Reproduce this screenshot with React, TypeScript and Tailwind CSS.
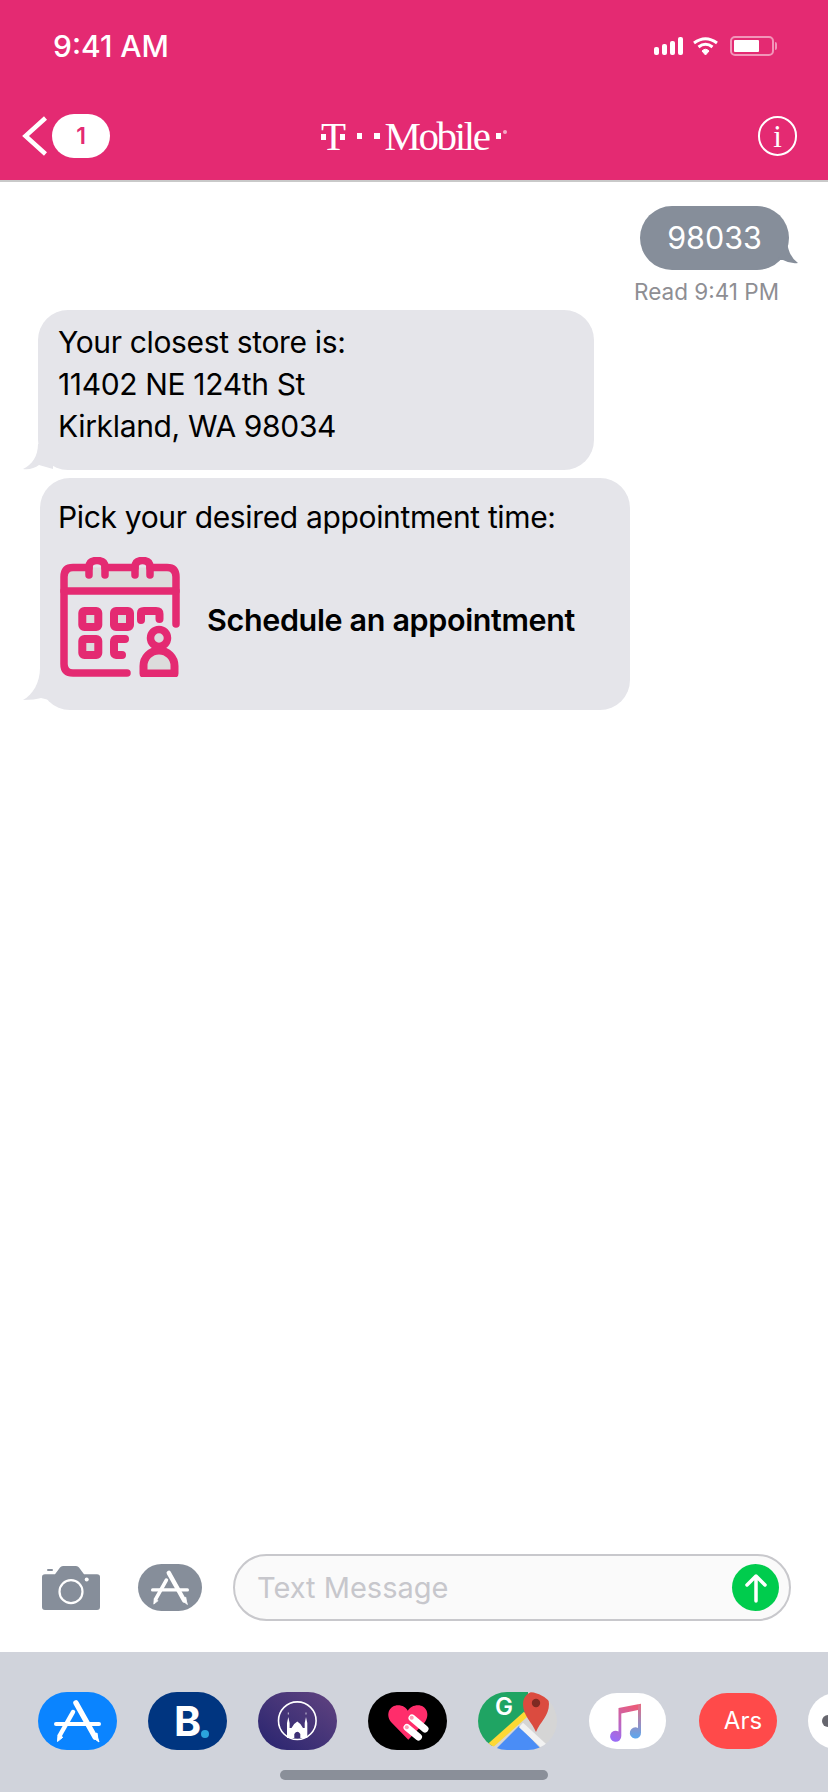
import React from 'react';

const AppStoreGlyph = () => (
  <svg viewBox="0 0 79 58" className="w-full h-full" fill="none" stroke="#fff" strokeLinecap="round">
    <path d="M38 11 L57 45" strokeWidth="5.5" />
    <path d="M35 20 L22 43" strokeWidth="4.5" />
    <path d="M18 32 H61" strokeWidth="4" />
    <path d="M20 43 L19.5 49.5 L24.5 45.5 Z" fill="#fff" strokeWidth="1" />
    <path d="M55 43 L59 41 Q59.5 46 61 50 Q56.5 48 55 43 Z" fill="#fff" strokeWidth="1" />
  </svg>
);

const Tail = ({ className, d, w, h, fill }: { className: string; d: string; w: number; h: number; fill: string }) => (
  <svg className={`absolute ${className}`} width={w} height={h} viewBox={`0 0 ${w} ${h}`}>
    <path d={d} fill={fill} />
  </svg>
);

const CalendarIcon = () => (
  <svg viewBox="0 0 120 120" className="w-[120px] h-[120px] shrink-0" fill="none" stroke="#e42a72" strokeWidth="7.5" strokeLinecap="round" strokeLinejoin="round">
    <path d="M4 34 V20 Q4 10.5 13 10.5 H107 Q116 10.5 116 20 V34 Z" fill="#dcdcdc" stroke="none" />
    <path d="M29 10.5 H13 Q4 10.5 4 20 V107 Q4 116 13 116 H67" />
    <path d="M45 10.5 H75 M90 10.5 H107 Q116 10.5 116 20 V67" />
    <path d="M4 34 H116" />
    <path d="M29 18 V10 Q29 3.5 37 3.5 Q45 3.5 45 10 V18" />
    <path d="M75 18 V10 Q75 3.5 82.5 3.5 Q90 3.5 90 10 V18" />
    <rect x="22.3" y="54" width="16" height="16" rx="2" fill="#dcdcdc" strokeWidth="8" />
    <rect x="54" y="54" width="16" height="16" rx="2" fill="#dcdcdc" strokeWidth="8" />
    <path d="M81 63 V56 Q81 54 84 54 H96 Q99.5 54 99.5 57 V62" strokeWidth="8" />
    <rect x="22.3" y="82" width="16" height="16" rx="2" fill="#dcdcdc" strokeWidth="8" />
    <path d="M65 82 H56 Q54 82 54 84.5 V95.5 Q54 98 56 98 H62" strokeWidth="8" />
    <circle cx="99" cy="81" r="8.5" fill="#dcdcdc" />
    <path d="M83.5 116.5 V109 A15.5 15.5 0 0 1 114.5 109 V116.5 Z" fill="#dcdcdc" strokeWidth="8" />
  </svg>
);

const AppIcon = ({ className, children }: { className: string; children?: React.ReactNode }) => (
  <div className="w-[79px] h-[58px] shrink-0 flex items-center justify-center">
    <div className={`overflow-hidden relative flex items-center justify-center ${className}`}>{children}</div>
  </div>
);

export default function App() {
  return (
    <div className="w-[828px] h-[1792px] overflow-hidden bg-white flex flex-col font-['Inter',sans-serif]">
      {/* header */}
      <header className="h-[182px] shrink-0 bg-[#e42a72] border-b-2 border-[#c9c9c9] text-white">
        <div className="h-[92px] flex items-center justify-between pl-[53px] pr-[51px]">
          <span className="text-[30px] font-medium">9:41 AM</span>
          <div className="flex items-center gap-[10px]">
            <div className="flex items-end gap-[3px] h-[18px]">
              <div className="w-[5px] h-[8px] bg-white rounded-[2px]" />
              <div className="w-[5px] h-[11px] bg-white rounded-[2px]" />
              <div className="w-[5px] h-[14px] bg-white rounded-[2px]" />
              <div className="w-[5px] h-[18px] bg-white rounded-[2px]" />
            </div>
            <svg width="25" height="18" viewBox="0 0 25 18" fill="none" stroke="#fff" strokeWidth="3">
              <path d="M1 6 Q12.5 -2.5 24 6" />
              <path d="M5.5 10 Q12.5 4.5 19.5 10" />
              <path d="M9 14 L12.5 18 L16 14 Q12.5 10.5 9 14 Z" fill="#fff" strokeWidth="1" />
            </svg>
            <div className="flex items-center gap-[1px] ml-[2px]">
              <div className="w-[44px] h-[20px] rounded-[5px] border-2 border-white/50 p-[2px]">
                <div className="w-[25px] h-full bg-white rounded-[1px]" />
              </div>
              <div className="w-[2px] h-[8px] bg-white/50 rounded-r-[2px]" />
            </div>
          </div>
        </div>
        <div className="mt-[22px] h-[44px] grid grid-cols-[1fr_auto_1fr] items-center">
          <div className="flex items-center pl-[22px] gap-[5px]">
            <svg width="25" height="40" viewBox="0 0 25 40" fill="none" stroke="#fff" strokeWidth="4.5">
              <path d="M23.5 2 L3.5 20 L23.5 38" />
            </svg>
            <div className="w-[58px] h-[44px] rounded-full bg-white flex items-center justify-center text-[#e42a72] text-[23px] font-semibold">1</div>
          </div>
          <div className="flex items-center font-['Liberation_Serif',serif] h-[44px]">
            <div className="relative w-[24px] flex justify-center text-[41px] leading-none">
              T
              <div className="absolute left-0 top-[18px] w-[5px] h-[6px] bg-white" />
              <div className="absolute right-0 top-[18px] w-[5px] h-[6px] bg-white" />
            </div>
            <div className="w-[5px] h-[6px] bg-white ml-[12px]" />
            <div className="w-[6px] h-[6px] bg-white ml-[12px]" />
            <span className="text-[41px] leading-none tracking-[-2.4px] ml-[4px]">Mobile</span>
            <div className="w-[5px] h-[6px] bg-white ml-[7px]" />
            <div className="w-[4px] h-[4px] rounded-full bg-white/60 ml-[2px] mb-[8px]" />
          </div>
          <div className="flex justify-end pr-[31px]">
            <div className="w-[39px] h-[40px] rounded-full border-2 border-white flex items-center justify-center font-['Liberation_Serif',serif] text-[31px] leading-none">i</div>
          </div>
        </div>
      </header>

      {/* messages */}
      <main className="flex-1 flex flex-col items-start pt-[24px] text-[30px] tracking-[-0.35px] text-black">
        <div className="relative self-end mr-[39px] w-[149px] h-[64px] rounded-[32px] bg-[#868e9a] text-white text-[30.5px] tracking-normal flex items-center justify-center">
          98033
          <Tail className="right-[-9px] top-[34px]" w={20} h={24} fill="#868e9a" d="M9 0 Q10 16 20 23 Q12 24 5 20 L0 20 Z" />
        </div>
        <div className="self-end mr-[49px] mt-[9px] text-[22.5px] tracking-normal leading-[26px] text-[#8e8e93]">Read 9:41 PM</div>
        <div className="relative ml-[38px] mt-[5px] w-[556px] h-[160px] rounded-[30px] bg-[#e5e5ea] pl-[20px] pt-[11px] leading-[42px]">
          <Tail className="left-[-15px] bottom-0" w={30} h={26} fill="#e5e5ea" d="M15 0 C15 12 9 21 0 25 C6 26 12 24 16 21 L30 25 V0 Z" />
          <div>Your closest store is:</div>
          <div>11402 NE 124th St</div>
          <div>Kirkland, WA 98034</div>
        </div>
        <div className="relative ml-[40px] mt-[8px] w-[590px] h-[232px] rounded-[30px] bg-[#e5e5ea] pl-[19px] pt-[18px]">
          <Tail className="left-[-17px] bottom-[8px]" w={34} h={34} fill="#e5e5ea" d="M17 0 C17 14 10 27 0 32 C8 32 14 31 18 30 L34 34 V0 Z" />
          <div className="leading-[42px] -ml-[1px]">Pick your desired appointment time:</div>
          <div className="flex items-center gap-[27px] mt-[19px] pl-[1px]">
            <CalendarIcon />
            <span className="font-semibold text-[30.5px] mt-[6px]">Schedule an appointment</span>
          </div>
        </div>
      </main>

      {/* input row */}
      <div className="h-[98px] shrink-0">
        <div className="flex items-center w-full pl-[42px] pr-[37px] h-[67px]">
          <svg width="58" height="44" viewBox="0 0 58 44" className="shrink-0">
            <path d="M3 8.3 H13 L18 1.5 Q19 0 21 0 H34 Q36 0 37 1.5 L42 8.3 H55 Q58 8.3 58 11 V41 Q58 44 55 44 H3 Q0 44 0 41 V11 Q0 8.3 3 8.3 Z" fill="#868e9a" />
            <rect x="5" y="3" width="6" height="2" rx="1" fill="#868e9a" />
            <circle cx="29" cy="25.7" r="11.5" fill="none" stroke="#fff" strokeWidth="2.2" />
            <circle cx="44.7" cy="13.5" r="2" fill="#fff" />
          </svg>
          <div className="w-[64px] h-[47px] rounded-full bg-[#868e9a] ml-[38px] shrink-0">
            <AppStoreGlyph />
          </div>
          <div className="ml-[31px] flex-1 h-[67px] rounded-full border-2 border-[#c8c8cc] bg-[#fafafa] flex items-center justify-between pl-[22px] pr-[10px]">
            <span className="text-[29px] text-[#c7c7cc]">Text Message</span>
            <div className="w-[47px] h-[47px] rounded-full bg-[#00cc4d] flex items-center justify-center">
              <svg width="24" height="30" viewBox="0 0 24 30" fill="none" stroke="#fff" strokeWidth="3.5" strokeLinecap="round" strokeLinejoin="round">
                <path d="M12 28 V3 M3 12 L12 3 L21 12" />
              </svg>
            </div>
          </div>
        </div>
      </div>

      {/* app tray */}
      <div className="h-[140px] shrink-0 bg-[#d0d3db] flex flex-col pt-[40px] overflow-hidden">
        <div className="flex gap-[31px] pl-[38px]">
          <AppIcon className="w-[79px] h-[58px] rounded-full bg-[#0a84ff]">
            <AppStoreGlyph />
          </AppIcon>
          <AppIcon className="w-[79px] h-[58px] rounded-full bg-[#003580]">
            <span className="text-white font-bold text-[41px] leading-none">B</span>
            <div className="absolute left-[53px] top-[38px] w-[8px] h-[8px] rounded-full bg-[#2ba4dc]" />
          </AppIcon>
          <AppIcon className="w-[79px] h-[58px] rounded-full bg-linear-to-tr from-[#28236f] to-[#624380]">
            <svg viewBox="0 0 79 58" className="w-full h-full">
              <circle cx="39.3" cy="28.7" r="18.8" fill="none" stroke="#fff" strokeWidth="1.6" />
              <path d="M29 46 V31 L30.3 25 L31.6 31 V36 L33.5 36 Q35 32 39.3 29.5 Q43.5 32 45 36 L46.7 36 V31 L48 25 L49.3 31 V46 H42.3 V42 Q39.3 37.5 36.3 42 V46 Z" fill="#fff" />
              <rect x="29.8" y="20.5" width="1" height="2" fill="#fff" opacity="0.7" />
              <rect x="47.5" y="20.5" width="1" height="2" fill="#fff" opacity="0.7" />
            </svg>
          </AppIcon>
          <AppIcon className="w-[79px] h-[58px] rounded-full bg-black">
            <svg viewBox="0 0 79 58" className="w-full h-full">
              <path d="M40.3 47.7 L23 30 C17 22 22 13.3 30 13.3 C34.5 13.3 38 15.5 39.8 18.7 C41.8 15.5 45.5 13.3 50 13.3 C58 13.3 62.5 22 57 30 Z" fill="#ff2d6b" />
              <path d="M44 26 L57 37" stroke="#fff" strokeWidth="7" strokeLinecap="round" />
              <path d="M39 35.5 L50.5 45" stroke="#fff" strokeWidth="7" strokeLinecap="round" />
              <circle cx="43.7" cy="25.8" r="2" fill="#ff9ab5" />
              <circle cx="38.8" cy="35.2" r="2" fill="#ff9ab5" />
            </svg>
          </AppIcon>
          <AppIcon className="w-[79px] h-[58px] rounded-full bg-[#d5d5d5]">
            <svg viewBox="0 0 79 58" className="absolute inset-0 w-full h-full">
              <path d="M0 0 H50 V18 L12 56 H0 Z" fill="#1fa463" />
              <path d="M17 58 L41 34 L64 58 Z" fill="#4a8df6" />
              <path d="M12 54 L48 22" stroke="#fdd835" strokeWidth="6" />
              <path d="M43 33 L68 56" stroke="#f2f2f2" strokeWidth="6" />
              <path d="M58 40 C54 30 45 24 45 12 A13 13 0 0 1 71 12 C71 24 62 30 58 40 Z" fill="#db4b3f" />
              <circle cx="58" cy="11" r="4.2" fill="#7e2a22" />
            </svg>
            <span className="absolute left-[17px] top-[1px] text-white font-semibold text-[24px] leading-[28px]">G</span>
          </AppIcon>
          <AppIcon className="w-[77px] h-[56px] rounded-full bg-white">
            <svg viewBox="0 0 77 56" className="w-full h-full">
              <defs>
                <linearGradient id="noteA" x1="0.7" y1="0" x2="0.3" y2="1">
                  <stop offset="0" stopColor="#ea5c7b" />
                  <stop offset="1" stopColor="#9a6cf5" />
                </linearGradient>
                <linearGradient id="noteB" x1="0.5" y1="0" x2="0.5" y2="1">
                  <stop offset="0" stopColor="#ea6a80" />
                  <stop offset="1" stopColor="#5aa8f0" />
                </linearGradient>
              </defs>
              <path d="M29.5 15 L49 11.3 V17 L32.3 20.5 V43 A5.6 5.6 0 1 1 29.5 38.4 Z" fill="url(#noteA)" />
              <path d="M49 11.3 L52 10.7 V39.5 A5.6 5.6 0 1 1 49 35 Z" fill="url(#noteB)" />
            </svg>
          </AppIcon>
          <AppIcon className="w-[78px] h-[56px] rounded-full bg-[#ff4a4a]">
            <span className="text-white text-[24px] ml-[11px]">Ars</span>
          </AppIcon>
          <AppIcon className="w-[79px] h-[56px] rounded-full bg-white">
            <div className="absolute left-[14px] top-[22px] w-[12px] h-[12px] rounded-full bg-[#66666e]" />
          </AppIcon>
        </div>
        <div className="mt-[20px] mx-auto w-[268px] h-[10px] rounded-full bg-[#8a8f99]" />
      </div>
    </div>
  );
}
